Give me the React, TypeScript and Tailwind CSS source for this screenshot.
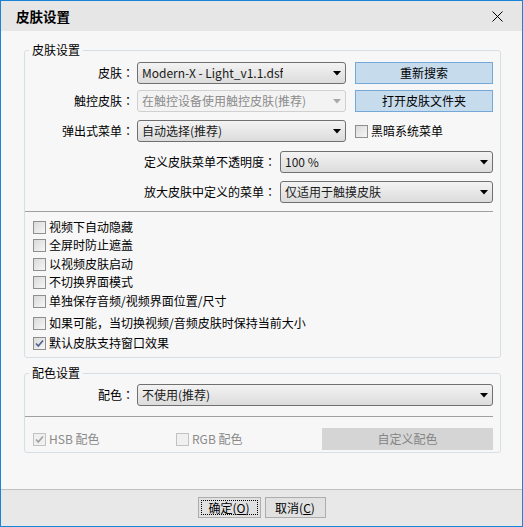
import React from "react";

const FONT = { fontFamily: '"Noto Sans CJK SC", "Noto Sans", sans-serif' };

// full-width colon sits centred in the JP face, like the reference
function Label({ text, width }: { text: string; width: string }) {
  const body = text.replace(/：$/, "");
  return (
    <div className={"text-right " + width}>
      {body}
      <span style={{ fontFamily: '"Noto Sans CJK JP", sans-serif' }}>：</span>
    </div>
  );
}

function Arrow({ disabled }: { disabled?: boolean }) {
  return (
    <svg width="8" height="5" viewBox="0 0 8 5" className="shrink-0">
      <path d="M0 0 H8 L4 4.5 Z" fill={disabled ? "#a8a8a8" : "#000"} />
    </svg>
  );
}

function Combo({
  text,
  width,
  disabled,
}: {
  text: string;
  width: string;
  disabled?: boolean;
}) {
  return (
    <div
      className={
        "flex h-[22px] shrink-0 items-center justify-between rounded-[3px] border pl-[4px] pr-[4px] " +
        width +
        (disabled
          ? " border-[#d0d0d0] bg-[#f3f3f3] text-[#8c8c8c]"
          : " border-[#707070] bg-linear-to-b from-[#f3f3f3] to-[#dcdcdc] text-[#1a1a1a]")
      }
    >
      <span className="truncate leading-[20px]">{text}</span>
      <Arrow disabled={disabled} />
    </div>
  );
}

function Check({
  label,
  checked,
  disabled,
}: {
  label: string;
  checked?: boolean;
  disabled?: boolean;
}) {
  return (
    <div className="flex h-[18px] items-center">
      <div
        className={
          "relative flex h-[13px] w-[13px] shrink-0 items-center justify-center border " +
          (disabled ? "border-[#c2c2c2] bg-[#f0f0f0]" : "border-[#8f8f8f] bg-linear-to-br from-[#dadada] to-[#f6f6f6]")
        }
      >
        {checked && (
          <svg width="11" height="11" viewBox="0 0 11 11">
            <path
              d="M2 5.5 L4.3 8 L9 2.5"
              fill="none"
              stroke={disabled ? "#a0a0a0" : "#4d5f8f"}
              strokeWidth="1.6"
            />
          </svg>
        )}
      </div>
      <span className={"ml-[3px] leading-[18px] " + (disabled ? "text-[#8a8a8a]" : "text-black")}>
        {label}
      </span>
    </div>
  );
}

function BlueButton({ children }: { children: React.ReactNode }) {
  return (
    <div className="ml-[9px] flex h-[22px] w-[138px] items-center justify-center border border-[#74a8d8] bg-[#c6dbec] text-black">
      {children}
    </div>
  );
}

export default function App() {
  const options = [
    "视频下自动隐藏",
    "全屏时防止遮盖",
    "以视频皮肤启动",
    "不切换界面模式",
    "单独保存音频/视频界面位置/尺寸",
    "如果可能，当切换视频/音频皮肤时保持当前大小",
    "默认皮肤支持窗口效果",
  ];
  const gaps = ["mt-[6px]", "mt-0", "mt-[1px]", "mt-0", "mt-[1px]", "mt-[4px]", "mt-[2px]"];

  return (
    <div
      className="flex h-[527px] w-[523px] flex-col border border-[#1883d7] bg-[#f7f7f7] text-[12px] text-black"
      style={FONT}
    >
      {/* title bar */}
      <div className="flex h-[30px] shrink-0 items-center justify-between bg-[#e6e6e6] pl-[15px] pr-[19px]">
        <span className="text-[13.5px] font-bold leading-[20px]">皮肤设置</span>
        <svg width="11" height="11" viewBox="0 0 11 11">
          <path d="M0.5 0.5 L10.5 10.5 M10.5 0.5 L0.5 10.5" stroke="#000" strokeWidth="1" />
        </svg>
      </div>

      {/* body */}
      <div className="flex flex-1 flex-col pt-[11px]">
        <fieldset className="ml-[23px] w-[477px] rounded-[3px] border border-[#d6dfe6] pb-[5px]">
          <legend className="ml-[4px] px-[3px] leading-[16px]">皮肤设置</legend>

          <div className="mt-[4px] flex items-center">
            <Label text="皮肤：" width="w-[109px]" />
            <div className="ml-[3px]">
              <Combo text="Modern-X - Light_v1.1.dsf" width="w-[209px]" />
            </div>
            <BlueButton>重新搜索</BlueButton>
          </div>

          <div className="mt-[6px] flex items-center">
            <Label text="触控皮肤：" width="w-[109px]" />
            <div className="ml-[3px]">
              <Combo text="在触控设备使用触控皮肤(推荐)" width="w-[209px]" disabled />
            </div>
            <BlueButton>打开皮肤文件夹</BlueButton>
          </div>

          <div className="mt-[8px] flex items-center">
            <Label text="弹出式菜单：" width="w-[109px]" />
            <div className="ml-[3px]">
              <Combo text="自动选择(推荐)" width="w-[209px]" />
            </div>
            <div className="ml-[9px]">
              <Check label="黑暗系统菜单" />
            </div>
          </div>

          <div className="mt-[9px] flex items-center">
            <Label text="定义皮肤菜单不透明度：" width="w-[251px]" />
            <div className="ml-[4px]">
              <Combo text="100 %" width="w-[213px]" />
            </div>
          </div>

          <div className="mt-[8px] flex items-center">
            <Label text="放大皮肤中定义的菜单：" width="w-[251px]" />
            <div className="ml-[4px]">
              <Combo text="仅适用于触摸皮肤" width="w-[213px]" />
            </div>
          </div>

          <div className="mt-[8px] h-px w-[468px] bg-[#a0a0a0]" />

          <div className="flex flex-col pl-[8px]">
            {options.map((o, i) => (
              <div key={o} className={gaps[i]}>
                <Check label={o} checked={i === 6} />
              </div>
            ))}
          </div>
        </fieldset>

        <fieldset className="ml-[23px] mt-[7px] w-[477px] rounded-[3px] border border-[#d6dfe6] pb-[2px]">
          <legend className="ml-[4px] px-[3px] leading-[16px]">配色设置</legend>

          <div className="mt-[3px] flex items-center">
            <Label text="配色：" width="w-[109px]" />
            <div className="ml-[3px]">
              <Combo text="不使用(推荐)" width="w-[356px]" />
            </div>
          </div>

          <div className="mt-[10px] h-px w-[468px] bg-[#a0a0a0]" />

          <div className="mt-[11px] flex items-center pl-[8px]">
            <div className="w-[143px]">
              <Check label="HSB 配色" checked disabled />
            </div>
            <div className="w-[146px]">
              <Check label="RGB 配色" disabled />
            </div>
            <div className="flex h-[22px] w-[171px] items-center justify-center bg-[#d5d5d5] text-[#858585]">
              自定义配色
            </div>
          </div>
        </fieldset>
      </div>

      {/* footer */}
      <div className="flex h-[37px] shrink-0 justify-center gap-[4px] border-t border-[#c0c0c0] bg-[#e8e8e8] pt-[7px]">
        <div className="flex h-[21px] w-[63px] items-stretch border border-[#adadad] bg-[#e1e1e1] p-[2px]">
          <div className="flex flex-1 items-center justify-center border border-dotted border-black leading-none">
            确定(<span className="underline">O</span>)
          </div>
        </div>
        <div className="flex h-[21px] w-[61px] items-center justify-center border border-[#adadad] bg-[#e1e1e1]">
          取消(<span className="underline">C</span>)
        </div>
      </div>
    </div>
  );
}
